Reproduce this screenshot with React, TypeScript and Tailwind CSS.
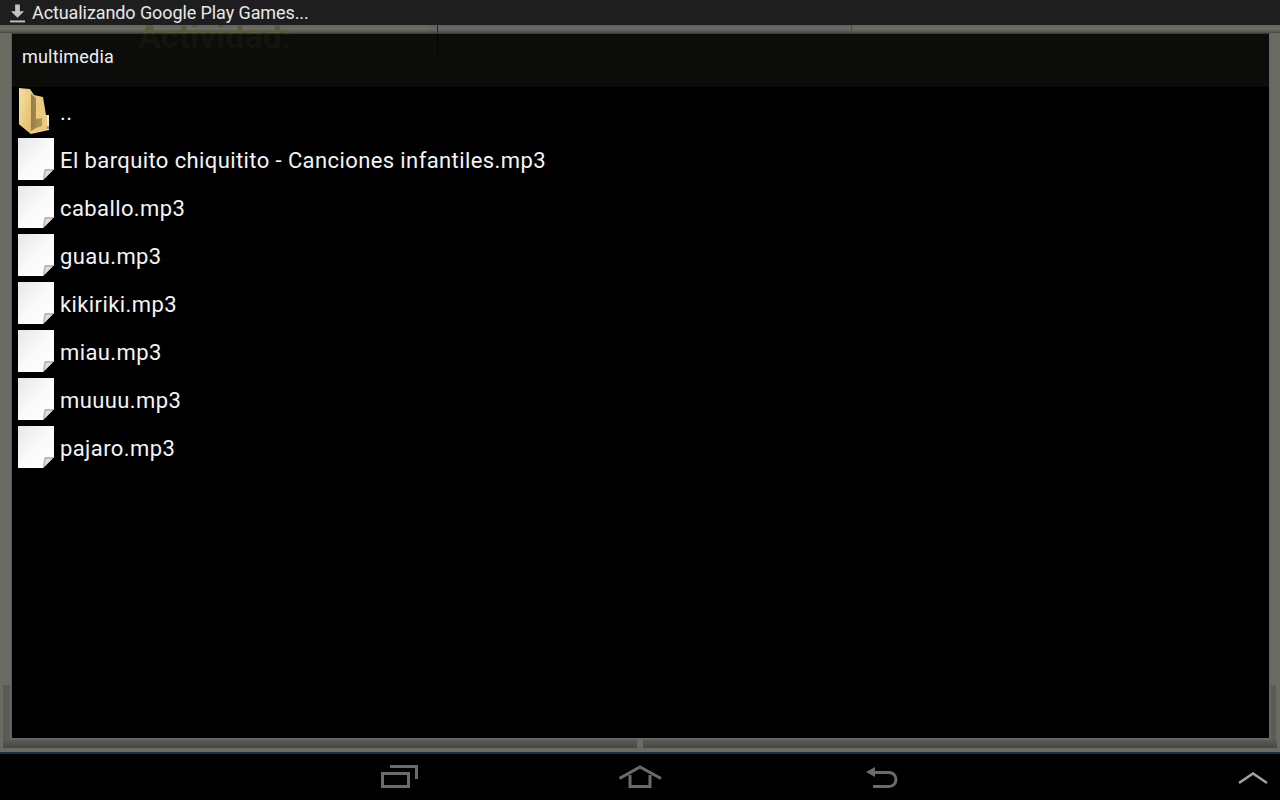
const files = [
  "El barquito chiquitito - Canciones infantiles.mp3",
  "caballo.mp3",
  "guau.mp3",
  "kikiriki.mp3",
  "miau.mp3",
  "muuuu.mp3",
  "pajaro.mp3",
];

function FolderIcon() {
  return (
    <svg width="30" height="46" viewBox="0 0 30 46" className="ml-px shrink-0">
      <defs>
        <linearGradient id="f1" x1="0" y1="0" x2="1" y2="1">
          <stop offset="0" stopColor="#f8e0a0" />
          <stop offset="1" stopColor="#dfba6a" />
        </linearGradient>
        <linearGradient id="f2" x1="0" y1="0" x2="1" y2="0">
          <stop offset="0" stopColor="#947c43" />
          <stop offset="1" stopColor="#b89853" />
        </linearGradient>
      </defs>
      <path d="M0 0 L11 1 L15 7 L24 9 L27 27 L30 27 L30 42 L12 46 L0 36 Z" fill="#eccb7f" />
      <path d="M12 6 L17 10 L17 31 L23 30 L23 38 L17 40 L12 43 Z" fill="url(#f2)" />
      <path d="M0 0 L12 6 L12 46 L0 36 Z" fill="url(#f1)" />
      <rect x="28" y="27" width="2" height="15" fill="#f5ebc8" />
      <rect x="28" y="38" width="2" height="3" fill="#6f9fc0" />
    </svg>
  );
}

function FileIcon() {
  return (
    <svg width="36" height="42" viewBox="0 0 36 42" className="shrink-0">
      <defs>
        <linearGradient id="p1" x1="0" y1="0" x2="1" y2="1">
          <stop offset="0" stopColor="#e6e6e6" />
          <stop offset="0.5" stopColor="#fafafa" />
          <stop offset="1" stopColor="#ffffff" />
        </linearGradient>
      </defs>
      <path d="M0 0 H36 V31 L25 42 H0 Z" fill="url(#p1)" />
      <path d="M25 42 L26 33 Q26 31 28 31 L36 31 Z" fill="#b5b5b5" />
      <path d="M27 40 L27.5 33 L34 32.5 Z" fill="#dedede" />
    </svg>
  );
}

function Row({ icon, name }: { icon: React.ReactNode; name: string }) {
  return (
    <div className="flex h-12 items-center gap-[6px] pl-[6px]">
      <div className="flex w-[36px] justify-start">{icon}</div>
      <span className="pt-[4px] text-[22px] leading-none tracking-[0.4px] whitespace-nowrap text-[#f4f4f4]">{name}</span>
    </div>
  );
}

export default function App() {
  return (
    <div className="flex h-[800px] w-[1280px] flex-col overflow-hidden bg-black font-['Roboto',sans-serif]">
      <div className="flex h-[25px] shrink-0 items-center gap-[7px] bg-[#1e1e1e] pl-[10px]">
        <svg width="15" height="20" viewBox="0 0 16 20">
          <path d="M5.5 1 H10.5 V8 H15 L8 15 L1 8 H5.5 Z" fill="#c4c4c4" />
          <rect x="0" y="18" width="16" height="2" fill="#c4c4c4" />
        </svg>
        <span className="text-[18px] leading-none tracking-[-0.09px] whitespace-nowrap text-[#e8e8e8]">Actualizando Google Play Games...</span>
      </div>

      <div className="flex h-[727px] shrink-0 flex-col bg-[#6a6c63]">
        <div className="relative flex h-[8px] shrink-0 overflow-hidden bg-linear-to-b from-[#64665c] via-[#6c6e64] to-[#4a4b46] pl-[429px]">
          <div className="h-full w-[423px] border-r border-[#4c4c4c] bg-linear-to-b from-[#606060] via-[#6a6a6a] to-[#4a4a4a] pl-[8px]">
            <div className="h-full w-px bg-[#222222]" />
          </div>
          <span className="absolute top-[-6px] left-[138px] text-[34px] leading-none font-bold whitespace-nowrap text-[#5c5c3c]">Actividad:</span>
        </div>

        <div className="flex min-h-0 flex-1">
          <div className="flex w-[11px] shrink-0 flex-col justify-end pr-px pl-[3px]">
            <div className="h-[55px] bg-[#5a5b57]" />
          </div>
          <div className="flex min-w-0 flex-1 flex-col border-t border-r-2 border-b-2 border-l border-t-[#3a3a38] border-r-[#666663] border-b-[#666663] border-l-[#5c5c59] bg-black">
            <div className="relative flex h-[53px] shrink-0 items-center overflow-hidden bg-[#0c0c0a] pb-[7px] pl-[10px]">
              <span className="absolute top-[-15px] left-[126px] text-[34px] leading-none font-bold whitespace-nowrap text-[#14140a]">Actividad:</span>
              <div className="absolute top-0 left-[425px] h-[22px] w-px bg-[#050505]" />
              <span className="relative text-[18px] leading-none tracking-[0.2px] text-[#f0f0f0]">multimedia</span>
            </div>
            <div className="flex flex-col">
              <Row icon={<FolderIcon />} name=".." />
              {files.map((f) => (
                <Row key={f} icon={<FileIcon />} name={f} />
              ))}
            </div>
          </div>
          <div className="flex w-[9px] shrink-0 flex-col justify-end pr-[4px]">
            <div className="h-[55px] bg-[#5a5b57]" />
          </div>
        </div>

        <div className="flex h-[8px] shrink-0 px-[3px]">
          <div className="flex-1 bg-linear-to-b from-[#5a5a58] to-[#474745]" />
          <div className="w-[6px] shrink-0" />
          <div className="flex-1 bg-linear-to-b from-[#5a5a58] to-[#474745]" />
        </div>
        <div className="h-[4px] shrink-0" />
      </div>

      <div className="h-[2px] shrink-0 bg-[#123344]" />
      <div className="grid min-h-0 flex-1 grid-cols-[1fr_auto_1fr] bg-black">
        <div />
        <div className="flex w-[518px] items-start pt-[11px]">
          <svg width="37" height="24" viewBox="0 0 37 24" fill="none" stroke="#6b6b6b" strokeWidth="3" className="mr-[201px] shrink-0">
            <rect x="1.5" y="8.5" width="26" height="13" />
            <path d="M9 1.5 H35.5 V14" />
          </svg>
          <svg width="43" height="24" viewBox="0 0 43 24" fill="none" stroke="#6b6b6b" strokeWidth="3" className="mr-[204px] shrink-0">
            <path d="M0.5 13.5 L21 2 L42 13.5" />
            <path d="M11 10 V21.5 H31 V10" />
          </svg>
          <svg width="32" height="24" viewBox="0 0 32 24" fill="none" stroke="#6b6b6b" strokeWidth="3" className="shrink-0">
            <path d="M5 7.5 H23 A7 7 0 0 1 23 21.5 H7" />
            <path d="M0 7 L9 2 V12 Z" fill="#6b6b6b" stroke="none" />
          </svg>
        </div>
        <div className="flex justify-end pt-[18px] pr-[12px]">
          <svg width="30" height="14" viewBox="0 0 30 14" fill="none" stroke="#a0a0a0" strokeWidth="2.6">
            <path d="M1 11 L15 1.5 L29 11" />
          </svg>
        </div>
      </div>
    </div>
  );
}
